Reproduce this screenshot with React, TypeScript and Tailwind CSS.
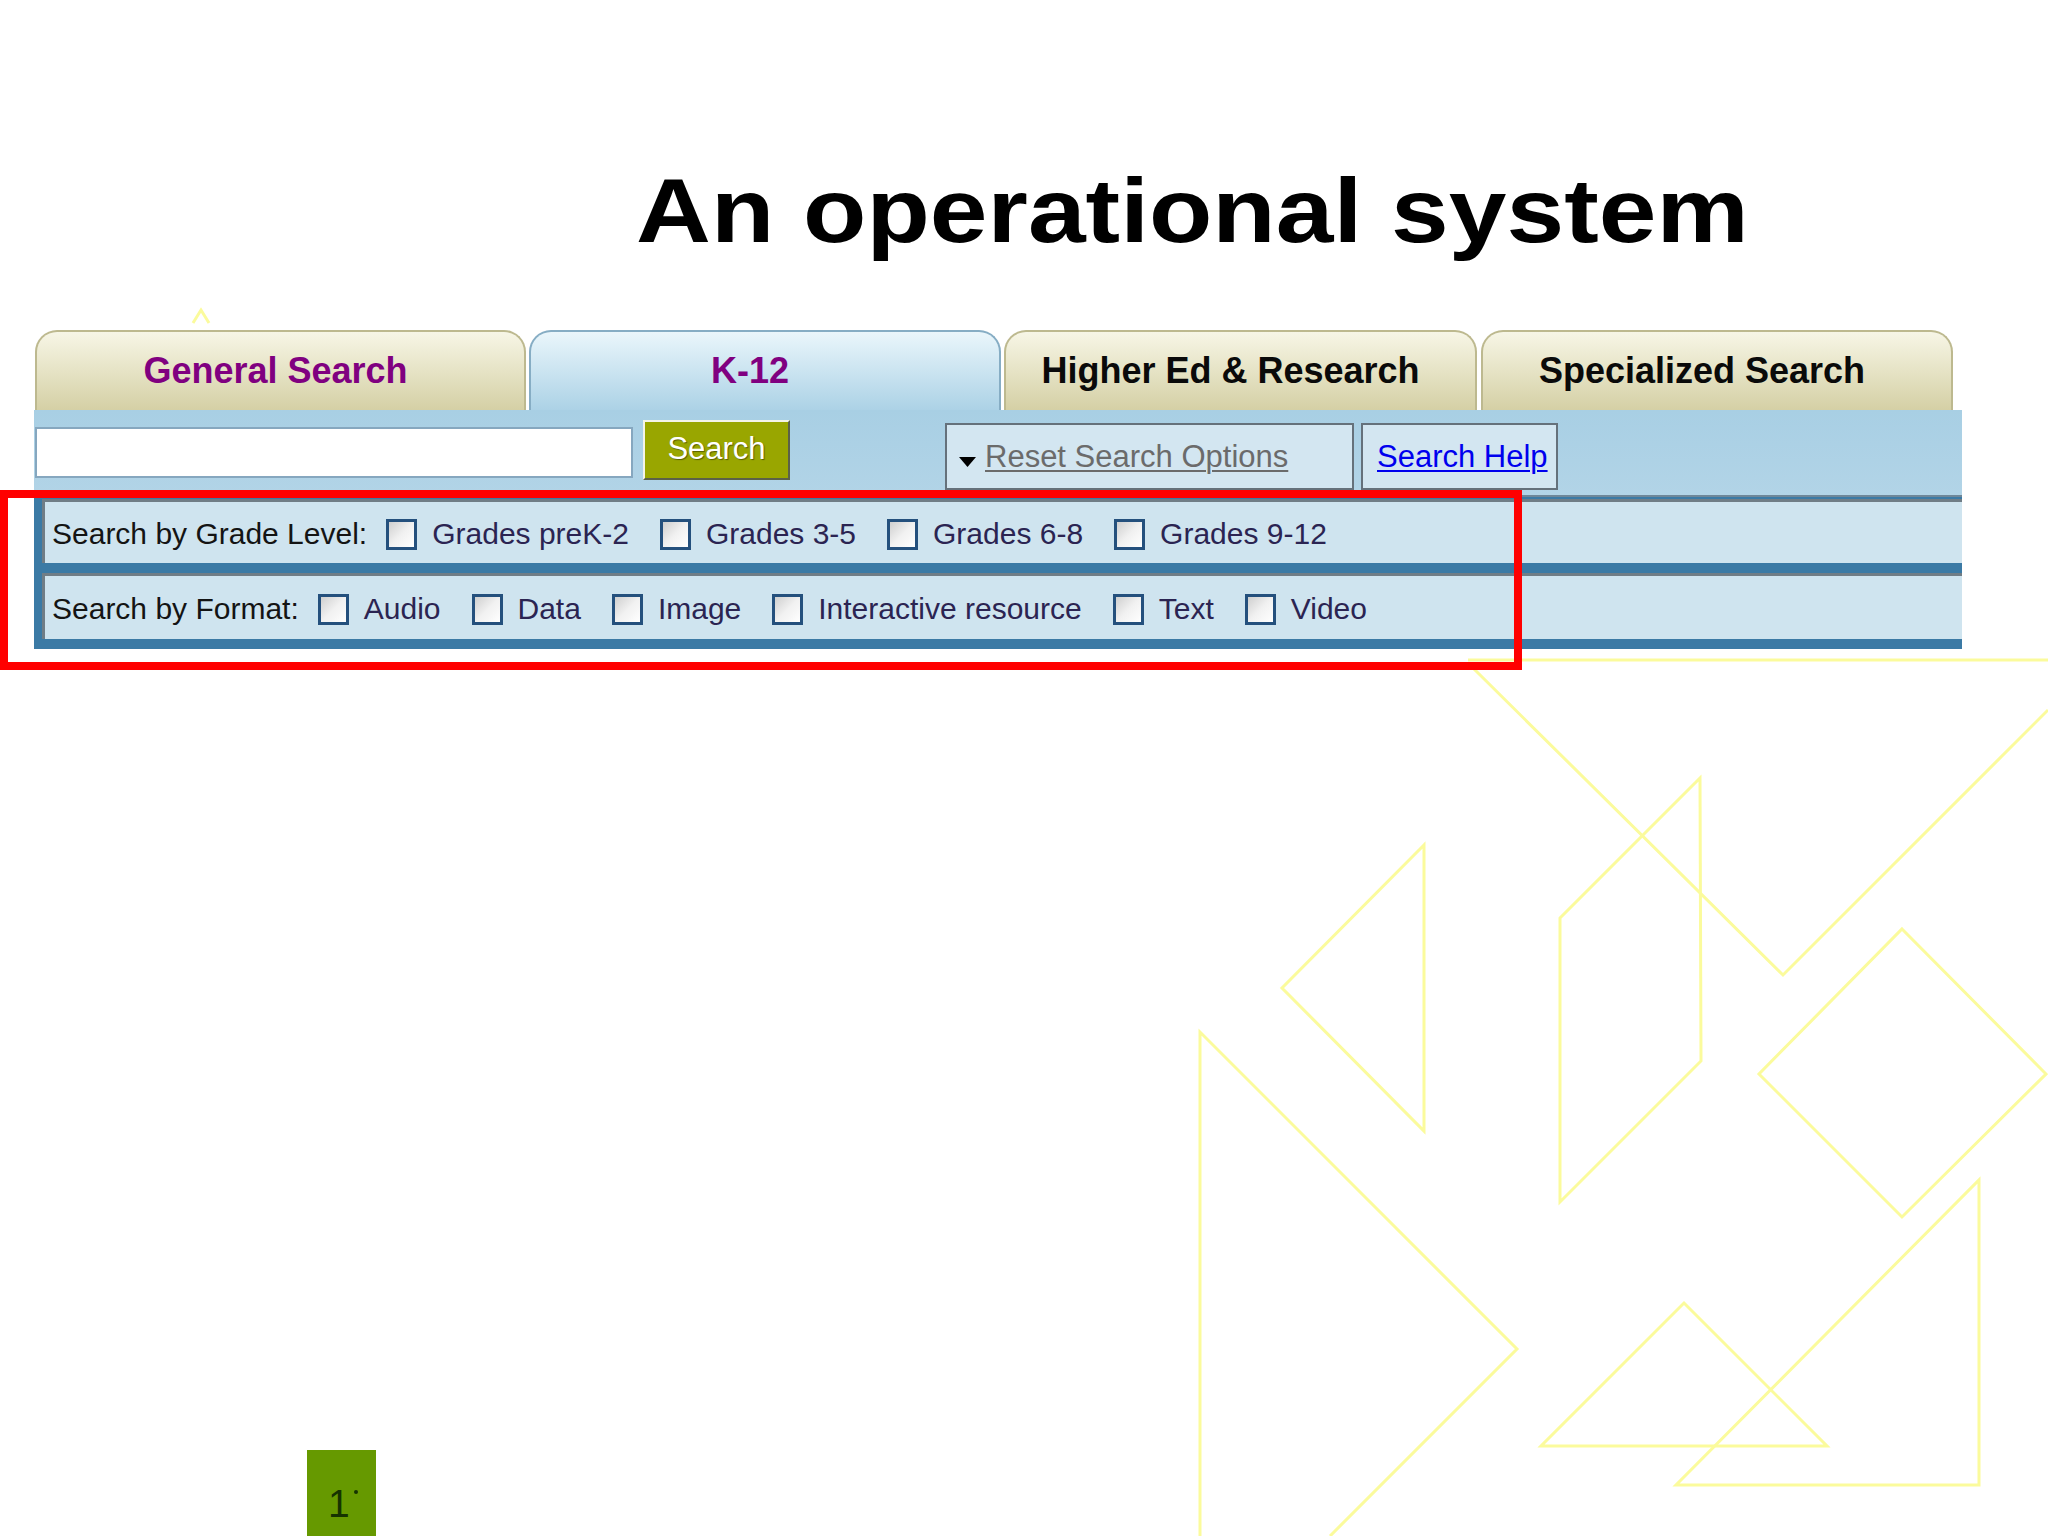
import React from 'react';

const TABS = [
  { label: 'General Search', active: false, purple: true, cls: 'ml-[1px] w-[491px] pr-[10px]' },
  { label: 'K-12', active: true, purple: true, cls: 'ml-[3px] w-[472px] pr-[30px]' },
  { label: 'Higher Ed & Research', active: false, purple: false, cls: 'ml-[3px] w-[473px] pr-[20px]' },
  { label: 'Specialized Search', active: false, purple: false, cls: 'ml-[4px] w-[472px] pr-[30px]' },
];

const GRADES = ['Grades preK-2', 'Grades 3-5', 'Grades 6-8', 'Grades 9-12'];
const FORMATS = ['Audio', 'Data', 'Image', 'Interactive resource', 'Text', 'Video'];

function Box({ first }: { first: boolean }) {
  return (
    <span
      className={[
        'inline-block w-[31px] h-[31px] shrink-0 border-[3px] border-[#24507d] bg-linear-to-br from-[#cfcfcf] via-[#f1f1f1] to-white',
        first ? 'ml-[19px]' : 'ml-[31px]',
      ].join(' ')}
    />
  );
}

function FilterRow({ title, options, height }: { title: string; options: string[]; height: string }) {
  return (
    <div className={`flex items-center pt-[3px] pl-[7px] border-t-[3px] border-l-[3px] border-[#707d86] bg-[#cfe4ef] ${height}`}>
      <span className="text-[30px] leading-none text-[#141414] whitespace-nowrap">{title}</span>
      {options.map((opt, i) => (
        <React.Fragment key={opt}>
          <Box first={i === 0} />
          <span className="ml-[15px] text-[30px] leading-none text-[#2b2452] whitespace-nowrap">{opt}</span>
        </React.Fragment>
      ))}
    </div>
  );
}

function Decor() {
  return (
    <svg className="absolute inset-0 pointer-events-none" width="2048" height="1536" viewBox="0 0 2048 1536" fill="none" stroke="#fbfb9c" strokeWidth="3" strokeLinejoin="miter">
      <path d="M193 323 L201 310 L209 323" />
      <path d="M1468 660 H2048" />
      <path d="M1474 669 L1783 975 L2048 710" />
      <path d="M1424 845 L1282 988 L1424 1131 Z" />
      <path d="M1560 918 L1700 778 L1701 1061 L1560 1202 Z" />
      <path d="M1902 929 L2046 1074 L1902 1217 L1759 1074 Z" />
      <path d="M1200 1536 V1032 L1517 1349 L1330 1536" />
      <path d="M1684 1303 L1827 1446 L1541 1446 Z" />
      <path d="M1979 1180 V1485 H1676 Z" />
    </svg>
  );
}

export default function App() {
  return (
    <div className="relative flex flex-col w-[2048px] h-[1536px] overflow-hidden bg-white font-['Liberation_Sans',Arial,sans-serif]">
      <Decor />

      <h1 className="relative self-start mt-[165px] ml-[636px] origin-left scale-x-[1.14] text-[91px] leading-none font-bold text-black whitespace-nowrap">
        An operational system
      </h1>

      <div className="relative mt-[74px] ml-[34px] w-[1928px]">
        {/* Tabs */}
        <div className="flex items-end h-[80px]">
          {TABS.map((t) => (
            <div
              key={t.label}
              className={[
                'h-full flex items-center justify-center rounded-t-[22px] border-2 border-b-0 text-[36px] leading-none font-bold whitespace-nowrap',
                t.active
                  ? 'border-[#86adc4] bg-linear-to-b from-[#eaf6fb] to-[#acd2e6]'
                  : 'border-[#bdb98f] bg-linear-to-b from-[#f7f6e6] to-[#d5d0a5]',
                t.purple ? 'text-[#800080]' : 'text-[#0a0a0a]',
                t.cls,
              ].join(' ')}
            >
              {t.label}
            </div>
          ))}
        </div>

        {/* Search bar */}
        <div className="flex items-start h-[87px] border-b-2 border-[#6e8799] bg-linear-to-b from-[#a8cfe4] to-[#b2d4e7]">
          <input
            type="text"
            className="mt-[17px] ml-[1px] w-[598px] h-[51px] bg-white border-2 border-[#86a7bf] outline-none"
          />
          <button
            type="button"
            className="mt-[10px] ml-[10px] w-[147px] h-[60px] pb-[4px] flex items-center justify-center bg-[#99a600] border-2 border-t-[#f4f4e8] border-l-[#f4f4e8] border-b-[#5b6148] border-r-[#5b6148] text-white text-[31px] leading-none [text-shadow:1px_1px_1px_#5a6000]"
          >
            Search
          </button>
          <div className="mt-[13px] ml-[155px] w-[409px] h-[67px] flex items-center pl-[12px] border-2 border-[#65717b] bg-[#d3e6f1]">
            <svg className="mt-[11px] shrink-0" width="17" height="10" viewBox="0 0 17 10">
              <path d="M0 0 H17 L8.5 10 Z" fill="#000" />
            </svg>
            <span className="ml-[9px] text-[31px] leading-none text-[#6b6b6b] underline decoration-2 underline-offset-[3px] whitespace-nowrap">
              Reset Search Options
            </span>
          </div>
          <div className="mt-[13px] ml-[7px] w-[197px] h-[67px] flex items-center pl-[14px] border-2 border-[#65717b] bg-[#d3e6f1]">
            <span className="text-[31px] leading-none text-[#0000ee] underline decoration-2 underline-offset-[3px] whitespace-nowrap">
              Search Help
            </span>
          </div>
        </div>

        {/* Filters */}
        <div className="flex flex-col gap-[10px] pt-[2px] pb-[10px] pl-[8px] bg-[#3b7aa5]">
          <FilterRow title="Search by Grade Level:" options={GRADES} height="h-[64px]" />
          <FilterRow title="Search by Format:" options={FORMATS} height="h-[66px]" />
        </div>
      </div>

      {/* Slide number */}
      <div className="relative mt-auto ml-[307px] w-[69px] h-[86px] flex items-start pl-[21px] pt-[34px] bg-[#669900]">
        <span className="text-[39px] leading-none text-[#163300]">1</span>
        <span className="ml-[4px] mt-[6px] w-[4px] h-[4px] rounded-full bg-[#163300]" />
      </div>

      {/* Highlight annotation */}
      <div className="absolute left-0 top-[490px] w-[1522px] h-[180px] border-[8px] border-[#ff0000]" />
    </div>
  );
}
